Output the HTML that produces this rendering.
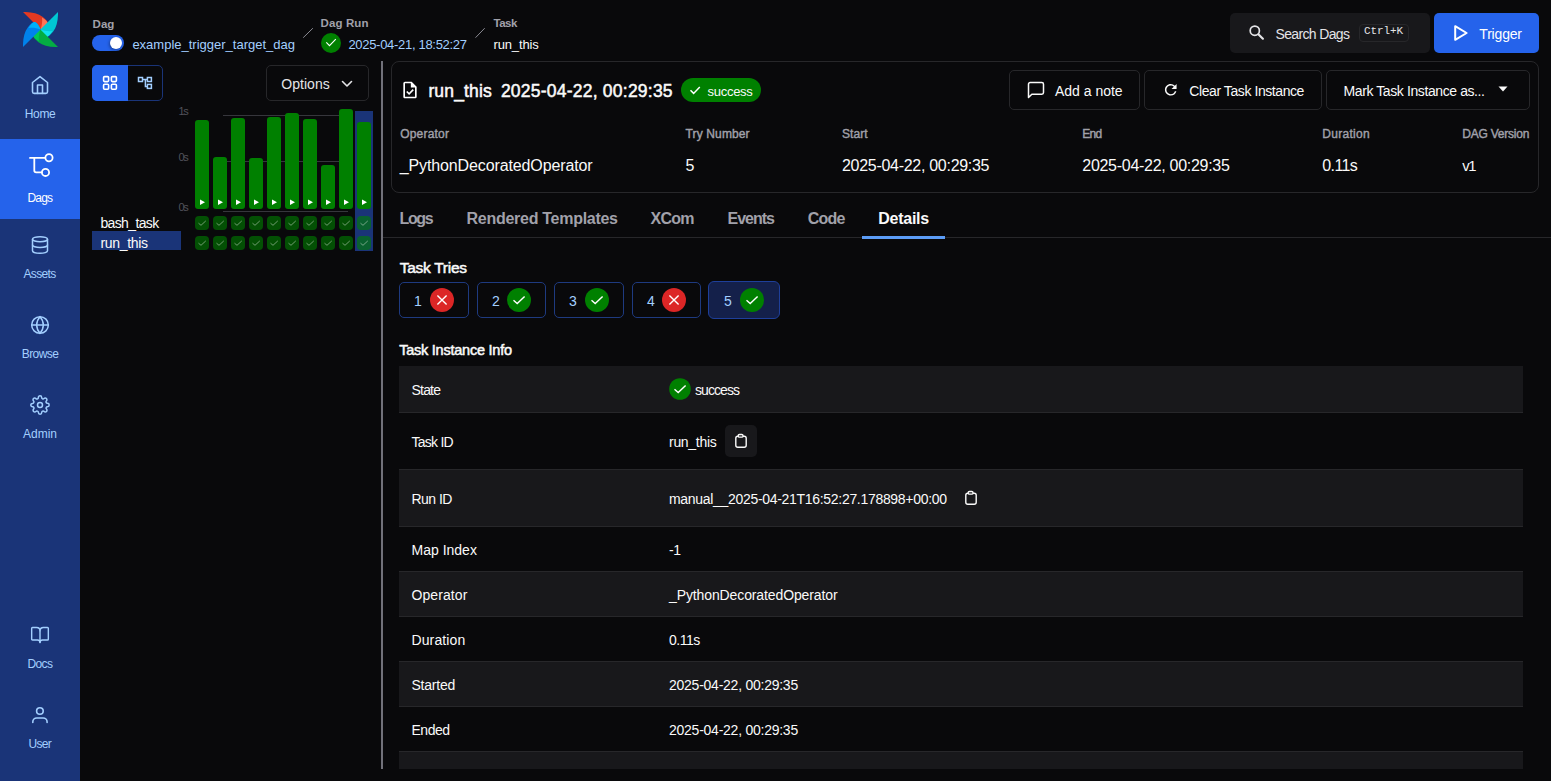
<!DOCTYPE html>
<html><head><meta charset="utf-8"><title>Airflow</title>
<style>
html,body{margin:0;padding:0;}
body{width:1551px;height:781px;overflow:hidden;background:#09090b;position:relative;font-family:"Liberation Sans",sans-serif;}
.t{position:absolute;white-space:nowrap;}
.r{position:absolute;display:block;}
</style></head><body>
<div class="r" style="left:0px;top:0px;width:80px;height:781px;background:#1a3478;border-radius:0px;"></div>
<div class="r" style="left:0px;top:139px;width:80px;height:80px;background:#2563eb;border-radius:0px;"></div>
<svg class="r" style="left:23px;top:12px;" width="35" height="35" viewBox="0 0 35 35">
<g transform="translate(0,0)">
 <path d="M0,0 C8,-0.2 15,1.3 19.5,4.8 C22.6,7.2 24.7,9.6 24.9,11.2 C24.8,13.4 23,15.3 17.6,17.6 Z" fill="#e43921"/>
 <path d="M19,5.6 C22.4,7.8 24.7,9.8 24.9,11.2 C24.8,13.4 23,15.3 17.6,17.6 C18.9,13.8 19.6,9.6 19,5.6 Z" fill="#ff7558"/>
</g>
<g transform="rotate(90 17.5 17.5)">
 <path d="M0,0 C8,-0.2 15,1.3 19.5,4.8 C22.6,7.2 24.7,9.6 24.9,11.2 C24.8,13.4 23,15.3 17.6,17.6 Z" fill="#00c7d4"/>
 <path d="M19,5.6 C22.4,7.8 24.7,9.8 24.9,11.2 C24.8,13.4 23,15.3 17.6,17.6 C18.9,13.8 19.6,9.6 19,5.6 Z" fill="#11e1ee"/>
</g>
<g transform="rotate(180 17.5 17.5)">
 <path d="M0,0 C8,-0.2 15,1.3 19.5,4.8 C22.6,7.2 24.7,9.6 24.9,11.2 C24.8,13.4 23,15.3 17.6,17.6 Z" fill="#04ad43"/>
 <path d="M19,5.6 C22.4,7.8 24.7,9.8 24.9,11.2 C24.8,13.4 23,15.3 17.6,17.6 C18.9,13.8 19.6,9.6 19,5.6 Z" fill="#00c853"/>
</g>
<g transform="rotate(270 17.5 17.5)">
 <path d="M0,0 C8,-0.2 15,1.3 19.5,4.8 C22.6,7.2 24.7,9.6 24.9,11.2 C24.8,13.4 23,15.3 17.6,17.6 Z" fill="#0082ec"/>
 <path d="M19,5.6 C22.4,7.8 24.7,9.8 24.9,11.2 C24.8,13.4 23,15.3 17.6,17.6 C18.9,13.8 19.6,9.6 19,5.6 Z" fill="#00b1f9"/>
</g></svg>
<svg class="r" style="left:29.9px;top:75.1px;" width="20" height="20" viewBox="0 0 24 24"><g fill="none" stroke="#a3cfff" stroke-width="1.9" stroke-linecap="round" stroke-linejoin="round"><path d="M3 9l9-7 9 7v11a2 2 0 0 1-2 2H5a2 2 0 0 1-2-2z"/><polyline points="9 22 9 12 15 12 15 22"/></g></svg>
<div class="t" style="left:24.7px;top:107.6px;font-size:12.00px;line-height:12.00px;color:#a3cfff;font-weight:400;letter-spacing:-0.303px;font-family:'Liberation Sans', sans-serif;">Home</div>
<svg class="r" style="left:26px;top:150.4px;" width="30" height="30" viewBox="0 0 30 30"><g fill="none" stroke="#ffffff" stroke-width="1.8" stroke-linecap="round"><path d="M4 7.9 H19"/><circle cx="23" cy="7.7" r="3.6"/><path d="M8.3 7.9 V20.5 Q8.3 22.4 10.2 22.4 H15.8"/><circle cx="19.5" cy="22.4" r="3.6"/></g></svg>
<div class="t" style="left:27.5px;top:192.4px;font-size:12.00px;line-height:12.00px;color:#ffffff;font-weight:400;letter-spacing:-0.838px;font-family:'Liberation Sans', sans-serif;">Dags</div>
<svg class="r" style="left:29.85px;top:235.3px;" width="20" height="20" viewBox="0 0 24 24"><g fill="none" stroke="#a3cfff" stroke-width="1.8" stroke-linecap="round" stroke-linejoin="round"><ellipse cx="12" cy="5" rx="9" ry="3"/><path d="M21 12c0 1.66-4 3-9 3s-9-1.34-9-3"/><path d="M3 5v14c0 1.66 4 3 9 3s9-1.34 9-3V5"/></g></svg>
<div class="t" style="left:23.5px;top:267.7px;font-size:12.00px;line-height:12.00px;color:#a3cfff;font-weight:400;letter-spacing:-0.662px;font-family:'Liberation Sans', sans-serif;">Assets</div>
<svg class="r" style="left:30.1px;top:314.9px;" width="20" height="20" viewBox="0 0 24 24"><g fill="none" stroke="#a3cfff" stroke-width="1.8" stroke-linecap="round" stroke-linejoin="round"><circle cx="12" cy="12" r="10"/><line x1="2" y1="12" x2="22" y2="12"/><path d="M12 2a15.3 15.3 0 0 1 4 10 15.3 15.3 0 0 1-4 10 15.3 15.3 0 0 1-4-10 15.3 15.3 0 0 1 4-10z"/></g></svg>
<div class="t" style="left:21.7px;top:347.5px;font-size:12.00px;line-height:12.00px;color:#a3cfff;font-weight:400;letter-spacing:-0.563px;font-family:'Liberation Sans', sans-serif;">Browse</div>
<svg class="r" style="left:29.7px;top:394.8px;" width="20" height="20" viewBox="0 0 24 24"><g fill="none" stroke="#a3cfff" stroke-width="1.8" stroke-linecap="round" stroke-linejoin="round"><circle cx="12" cy="12" r="3"/><path d="M19.4 15a1.65 1.65 0 0 0 .33 1.82l.06.06a2 2 0 0 1 0 2.83 2 2 0 0 1-2.83 0l-.06-.06a1.65 1.65 0 0 0-1.82-.33 1.65 1.65 0 0 0-1 1.51V21a2 2 0 0 1-2 2 2 2 0 0 1-2-2v-.09A1.65 1.65 0 0 0 9 19.4a1.650 1.65 0 0 0-1.82.33l-.06.06a2 2 0 0 1-2.83 0 2 2 0 0 1 0-2.83l.06-.06a1.65 1.65 0 0 0 .33-1.82 1.65 1.65 0 0 0-1.51-1H3a2 2 0 0 1-2-2 2 2 0 0 1 2-2h.09A1.65 1.65 0 0 0 4.6 9a1.65 1.65 0 0 0-.33-1.82l-.06-.06a2 2 0 0 1 0-2.83 2 2 0 0 1 2.83 0l.06.06a1.65 1.65 0 0 0 1.82.33H9a1.65 1.65 0 0 0 1-1.51V3a2 2 0 0 1 2-2 2 2 0 0 1 2 2v.09a1.65 1.65 0 0 0 1 1.51 1.65 1.65 0 0 0 1.82-.33l.06-.06a2 2 0 0 1 2.830 0 2 2 0 0 1 0 2.83l-.06.06a1.65 1.65 0 0 0-.33 1.82V9a1.65 1.65 0 0 0 1.51 1H21a2 2 0 0 1 2 2 2 2 0 0 1-2 2h-.09a1.65 1.65 0 0 0-1.51 1z"/></g></svg>
<div class="t" style="left:23.0px;top:427.5px;font-size:12.00px;line-height:12.00px;color:#a3cfff;font-weight:400;letter-spacing:-0.003px;font-family:'Liberation Sans', sans-serif;">Admin</div>
<svg class="r" style="left:30.1px;top:624.8px;" width="20" height="20" viewBox="0 0 24 24"><g fill="none" stroke="#a3cfff" stroke-width="1.7" stroke-linecap="round" stroke-linejoin="round"><path d="M12 7v14"/><path d="M3 18a1 1 0 0 1-1-1V4a1 1 0 0 1 1-1h5a4 4 0 0 1 4 4 4 4 0 0 1 4-4h5a1 1 0 0 1 1 1v13a1 1 0 0 1-1 1h-6a3 3 0 0 0-3 3 3 3 0 0 0-3-3z"/></g></svg>
<div class="t" style="left:27.5px;top:657.7px;font-size:12.00px;line-height:12.00px;color:#a3cfff;font-weight:400;letter-spacing:-0.613px;font-family:'Liberation Sans', sans-serif;">Docs</div>
<svg class="r" style="left:0px;top:0px;" width="80" height="781" viewBox="0 0 80 781"><g fill="none" stroke="#a3cfff" stroke-width="1.6" stroke-linecap="round"><circle cx="39.9" cy="711" r="3.3"/><path d="M32.8 722.4 v-0.4 a4 4 0 0 1 4-4 h6.3 a4 4 0 0 1 4 4 v0.4"/></g></svg>
<div class="t" style="left:28.4px;top:737.7px;font-size:12.00px;line-height:12.00px;color:#a3cfff;font-weight:400;letter-spacing:-0.679px;font-family:'Liberation Sans', sans-serif;">User</div>
<div class="t" style="left:92.6px;top:18.5px;font-size:11.50px;line-height:11.50px;color:#a1a1aa;font-weight:700;letter-spacing:-0.013px;font-family:'Liberation Sans', sans-serif;">Dag</div>
<div class="r" style="left:92px;top:35px;width:32px;height:16px;background:#2563eb;border-radius:8px;"></div>
<div class="r" style="left:110px;top:37px;width:12px;height:12px;background:#ffffff;border-radius:6px;box-shadow:-1px 1px 3px rgba(0,0,0,0.35);"></div>
<div class="t" style="left:132.4px;top:38.0px;font-size:13.00px;line-height:13.00px;color:#a3cfff;font-weight:400;letter-spacing:-0.000px;font-family:'Liberation Sans', sans-serif;">example_trigger_target_dag</div>
<svg class="r" style="left:302px;top:27px;" width="12" height="12" viewBox="0 0 12 12"><line x1="1.2" y1="10.7" x2="10.9" y2="1.2" stroke="#8a8a92" stroke-width="1"/></svg>
<div class="t" style="left:320.6px;top:18.4px;font-size:11.50px;line-height:11.50px;color:#a1a1aa;font-weight:700;letter-spacing:0.104px;font-family:'Liberation Sans', sans-serif;">Dag Run</div>
<svg class="r" style="left:321px;top:33px;" width="20" height="20" viewBox="0 0 20 20"><circle cx="10" cy="10" r="10" fill="#008000"/><path d="M5.3 9.3 L8.5 12.6 L14.8 6.2" fill="none" stroke="#fff" stroke-width="1.1"/></svg>
<div class="t" style="left:348.4px;top:37.7px;font-size:13.00px;line-height:13.00px;color:#a3cfff;font-weight:400;letter-spacing:-0.301px;font-family:'Liberation Sans', sans-serif;">2025-04-21, 18:52:27</div>
<svg class="r" style="left:474px;top:27px;" width="12" height="12" viewBox="0 0 12 12"><line x1="1.5" y1="10.7" x2="10.7" y2="1.2" stroke="#8a8a92" stroke-width="1"/></svg>
<div class="t" style="left:493.5px;top:18.4px;font-size:11.50px;line-height:11.50px;color:#a1a1aa;font-weight:700;letter-spacing:-0.486px;font-family:'Liberation Sans', sans-serif;">Task</div>
<div class="t" style="left:493.5px;top:37.7px;font-size:13.00px;line-height:13.00px;color:#fafafa;font-weight:400;letter-spacing:-0.150px;font-family:'Liberation Sans', sans-serif;">run_this</div>
<div class="r" style="left:1230px;top:13px;width:200px;height:40px;background:#18181b;border-radius:5px;"></div>
<svg class="r" style="left:1240px;top:18px;" width="30" height="30" viewBox="0 0 30 30"><g fill="none" stroke="#e4e4e7" stroke-linecap="round"><circle cx="14.8" cy="12.7" r="4.6" stroke-width="1.7"/><line x1="18.6" y1="16.5" x2="22.9" y2="20.7" stroke-width="2.2"/></g></svg>
<div class="t" style="left:1275.5px;top:27.2px;font-size:14.00px;line-height:14.00px;color:#e4e4e7;font-weight:400;letter-spacing:-0.643px;font-family:'Liberation Sans', sans-serif;">Search Dags</div>
<div class="r" style="left:1359px;top:24px;width:50px;height:18px;background:transparent;border:1px solid #27272a;box-sizing:border-box;border-radius:4px;"></div>
<div class="t" style="left:1364.0px;top:26.3px;font-size:11.00px;line-height:11.00px;color:#e4e4e7;font-weight:400;letter-spacing:-0.121px;font-family:'Liberation Mono', monospace;">Ctrl+K</div>
<div class="r" style="left:1434px;top:13px;width:105px;height:40px;background:#2563eb;border-radius:5px;"></div>
<svg class="r" style="left:1446px;top:18px;" width="30" height="30" viewBox="0 0 30 30"><polygon points="9.2,8.2 20.6,15 9.2,21.8" fill="none" stroke="#fff" stroke-width="2" stroke-linejoin="round"/></svg>
<div class="t" style="left:1479.3px;top:27.2px;font-size:14.00px;line-height:14.00px;color:#ffffff;font-weight:400;letter-spacing:-0.188px;font-family:'Liberation Sans', sans-serif;">Trigger</div>
<div class="r" style="left:92px;top:65px;width:71px;height:36px;background:transparent;border:1px solid #1a3478;box-sizing:border-box;border-radius:5px;"></div>
<div class="r" style="left:92px;top:65px;width:36px;height:36px;background:#2563eb;border-radius:0px;border-radius:5px 0 0 5px;"></div>
<svg class="r" style="left:102px;top:75px;" width="16" height="16" viewBox="0 0 16 16"><g fill="none" stroke="#fff" stroke-width="1.6"><rect x="1.6" y="1.6" width="5" height="5" rx="1"/><rect x="9.4" y="1.6" width="5" height="5" rx="1"/><rect x="1.6" y="9.2" width="5" height="5" rx="1"/><rect x="9.4" y="9.2" width="5" height="5" rx="1"/></g></svg>
<svg class="r" style="left:137px;top:76px;" width="16" height="14" viewBox="0 0 16 14"><g fill="none" stroke="#a3cfff" stroke-width="1.5"><rect x="1.5" y="1.5" width="4" height="4"/><rect x="10.4" y="1.5" width="4" height="4"/><rect x="10.4" y="8.4" width="4" height="4"/><path d="M5.5 3.4 H10.4 M8.4 3.4 V10.4 H10.4"/></g></svg>
<div class="r" style="left:266px;top:65px;width:103px;height:36px;background:transparent;border:1px solid #27272a;box-sizing:border-box;border-radius:5px;"></div>
<div class="t" style="left:281.3px;top:76.6px;font-size:14.00px;line-height:14.00px;color:#e4e4e7;font-weight:400;letter-spacing:0.025px;font-family:'Liberation Sans', sans-serif;">Options</div>
<svg class="r" style="left:339.5px;top:76.5px;" width="14" height="14" viewBox="0 0 14 14"><polyline points="2.5 4.5 7 9 11.5 4.5" fill="none" stroke="#e4e4e7" stroke-width="1.6" stroke-linecap="round" stroke-linejoin="round"/></svg>
<div class="t" style="left:178.5px;top:105.7px;font-size:11.00px;line-height:11.00px;color:#52525b;font-weight:400;letter-spacing:-1.318px;font-family:'Liberation Sans', sans-serif;">1s</div>
<div class="t" style="left:178.5px;top:151.9px;font-size:11.00px;line-height:11.00px;color:#52525b;font-weight:400;letter-spacing:-1.318px;font-family:'Liberation Sans', sans-serif;">0s</div>
<div class="t" style="left:178.5px;top:201.5px;font-size:11.00px;line-height:11.00px;color:#52525b;font-weight:400;letter-spacing:-1.318px;font-family:'Liberation Sans', sans-serif;">0s</div>
<div class="r" style="left:223px;top:115px;width:116px;height:1px;background:#36363c;border-radius:0px;"></div>
<div class="r" style="left:223px;top:161px;width:116px;height:1px;background:#36363c;border-radius:0px;"></div>
<div class="r" style="left:223px;top:211px;width:125px;height:1px;background:#36363c;border-radius:0px;"></div>
<div class="r" style="left:355px;top:111px;width:18px;height:140px;background:#1a3478;border-radius:0px;"></div>
<div class="r" style="left:195px;top:120px;width:14px;height:89px;background:#008000;border-radius:3px;"></div>
<svg class="r" style="left:199px;top:199px;" width="7" height="7" viewBox="0 0 7 7"><polygon points="1,0.5 6,3.25 1,6" fill="#fff"/></svg>
<div class="r" style="left:195px;top:216px;width:14px;height:14px;background:rgba(0,128,0,0.6);border-radius:4px;"></div>
<svg class="r" style="left:195px;top:216px;" width="14" height="14" viewBox="0 0 14 14"><polyline points="3.5 7.2 6 9.3 10.8 4.9" fill="none" stroke="rgba(220,230,220,0.55)" stroke-width="0.9"/></svg>
<div class="r" style="left:195px;top:236px;width:14px;height:14px;background:rgba(0,128,0,0.6);border-radius:4px;"></div>
<svg class="r" style="left:195px;top:236px;" width="14" height="14" viewBox="0 0 14 14"><polyline points="3.5 7.2 6 9.3 10.8 4.9" fill="none" stroke="rgba(220,230,220,0.55)" stroke-width="0.9"/></svg>
<div class="r" style="left:213px;top:157px;width:14px;height:52px;background:#008000;border-radius:3px;"></div>
<svg class="r" style="left:217px;top:199px;" width="7" height="7" viewBox="0 0 7 7"><polygon points="1,0.5 6,3.25 1,6" fill="#fff"/></svg>
<div class="r" style="left:213px;top:216px;width:14px;height:14px;background:rgba(0,128,0,0.6);border-radius:4px;"></div>
<svg class="r" style="left:213px;top:216px;" width="14" height="14" viewBox="0 0 14 14"><polyline points="3.5 7.2 6 9.3 10.8 4.9" fill="none" stroke="rgba(220,230,220,0.55)" stroke-width="0.9"/></svg>
<div class="r" style="left:213px;top:236px;width:14px;height:14px;background:rgba(0,128,0,0.6);border-radius:4px;"></div>
<svg class="r" style="left:213px;top:236px;" width="14" height="14" viewBox="0 0 14 14"><polyline points="3.5 7.2 6 9.3 10.8 4.9" fill="none" stroke="rgba(220,230,220,0.55)" stroke-width="0.9"/></svg>
<div class="r" style="left:231px;top:118px;width:14px;height:91px;background:#008000;border-radius:3px;"></div>
<svg class="r" style="left:235px;top:199px;" width="7" height="7" viewBox="0 0 7 7"><polygon points="1,0.5 6,3.25 1,6" fill="#fff"/></svg>
<div class="r" style="left:231px;top:216px;width:14px;height:14px;background:rgba(0,128,0,0.6);border-radius:4px;"></div>
<svg class="r" style="left:231px;top:216px;" width="14" height="14" viewBox="0 0 14 14"><polyline points="3.5 7.2 6 9.3 10.8 4.9" fill="none" stroke="rgba(220,230,220,0.55)" stroke-width="0.9"/></svg>
<div class="r" style="left:231px;top:236px;width:14px;height:14px;background:rgba(0,128,0,0.6);border-radius:4px;"></div>
<svg class="r" style="left:231px;top:236px;" width="14" height="14" viewBox="0 0 14 14"><polyline points="3.5 7.2 6 9.3 10.8 4.9" fill="none" stroke="rgba(220,230,220,0.55)" stroke-width="0.9"/></svg>
<div class="r" style="left:249px;top:158px;width:14px;height:51px;background:#008000;border-radius:3px;"></div>
<svg class="r" style="left:253px;top:199px;" width="7" height="7" viewBox="0 0 7 7"><polygon points="1,0.5 6,3.25 1,6" fill="#fff"/></svg>
<div class="r" style="left:249px;top:216px;width:14px;height:14px;background:rgba(0,128,0,0.6);border-radius:4px;"></div>
<svg class="r" style="left:249px;top:216px;" width="14" height="14" viewBox="0 0 14 14"><polyline points="3.5 7.2 6 9.3 10.8 4.9" fill="none" stroke="rgba(220,230,220,0.55)" stroke-width="0.9"/></svg>
<div class="r" style="left:249px;top:236px;width:14px;height:14px;background:rgba(0,128,0,0.6);border-radius:4px;"></div>
<svg class="r" style="left:249px;top:236px;" width="14" height="14" viewBox="0 0 14 14"><polyline points="3.5 7.2 6 9.3 10.8 4.9" fill="none" stroke="rgba(220,230,220,0.55)" stroke-width="0.9"/></svg>
<div class="r" style="left:267px;top:117px;width:14px;height:92px;background:#008000;border-radius:3px;"></div>
<svg class="r" style="left:271px;top:199px;" width="7" height="7" viewBox="0 0 7 7"><polygon points="1,0.5 6,3.25 1,6" fill="#fff"/></svg>
<div class="r" style="left:267px;top:216px;width:14px;height:14px;background:rgba(0,128,0,0.6);border-radius:4px;"></div>
<svg class="r" style="left:267px;top:216px;" width="14" height="14" viewBox="0 0 14 14"><polyline points="3.5 7.2 6 9.3 10.8 4.9" fill="none" stroke="rgba(220,230,220,0.55)" stroke-width="0.9"/></svg>
<div class="r" style="left:267px;top:236px;width:14px;height:14px;background:rgba(0,128,0,0.6);border-radius:4px;"></div>
<svg class="r" style="left:267px;top:236px;" width="14" height="14" viewBox="0 0 14 14"><polyline points="3.5 7.2 6 9.3 10.8 4.9" fill="none" stroke="rgba(220,230,220,0.55)" stroke-width="0.9"/></svg>
<div class="r" style="left:285px;top:113px;width:14px;height:96px;background:#008000;border-radius:3px;"></div>
<svg class="r" style="left:289px;top:199px;" width="7" height="7" viewBox="0 0 7 7"><polygon points="1,0.5 6,3.25 1,6" fill="#fff"/></svg>
<div class="r" style="left:285px;top:216px;width:14px;height:14px;background:rgba(0,128,0,0.6);border-radius:4px;"></div>
<svg class="r" style="left:285px;top:216px;" width="14" height="14" viewBox="0 0 14 14"><polyline points="3.5 7.2 6 9.3 10.8 4.9" fill="none" stroke="rgba(220,230,220,0.55)" stroke-width="0.9"/></svg>
<div class="r" style="left:285px;top:236px;width:14px;height:14px;background:rgba(0,128,0,0.6);border-radius:4px;"></div>
<svg class="r" style="left:285px;top:236px;" width="14" height="14" viewBox="0 0 14 14"><polyline points="3.5 7.2 6 9.3 10.8 4.9" fill="none" stroke="rgba(220,230,220,0.55)" stroke-width="0.9"/></svg>
<div class="r" style="left:303px;top:119px;width:14px;height:90px;background:#008000;border-radius:3px;"></div>
<svg class="r" style="left:307px;top:199px;" width="7" height="7" viewBox="0 0 7 7"><polygon points="1,0.5 6,3.25 1,6" fill="#fff"/></svg>
<div class="r" style="left:303px;top:216px;width:14px;height:14px;background:rgba(0,128,0,0.6);border-radius:4px;"></div>
<svg class="r" style="left:303px;top:216px;" width="14" height="14" viewBox="0 0 14 14"><polyline points="3.5 7.2 6 9.3 10.8 4.9" fill="none" stroke="rgba(220,230,220,0.55)" stroke-width="0.9"/></svg>
<div class="r" style="left:303px;top:236px;width:14px;height:14px;background:rgba(0,128,0,0.6);border-radius:4px;"></div>
<svg class="r" style="left:303px;top:236px;" width="14" height="14" viewBox="0 0 14 14"><polyline points="3.5 7.2 6 9.3 10.8 4.9" fill="none" stroke="rgba(220,230,220,0.55)" stroke-width="0.9"/></svg>
<div class="r" style="left:321px;top:165px;width:14px;height:44px;background:#008000;border-radius:3px;"></div>
<svg class="r" style="left:325px;top:199px;" width="7" height="7" viewBox="0 0 7 7"><polygon points="1,0.5 6,3.25 1,6" fill="#fff"/></svg>
<div class="r" style="left:321px;top:216px;width:14px;height:14px;background:rgba(0,128,0,0.6);border-radius:4px;"></div>
<svg class="r" style="left:321px;top:216px;" width="14" height="14" viewBox="0 0 14 14"><polyline points="3.5 7.2 6 9.3 10.8 4.9" fill="none" stroke="rgba(220,230,220,0.55)" stroke-width="0.9"/></svg>
<div class="r" style="left:321px;top:236px;width:14px;height:14px;background:rgba(0,128,0,0.6);border-radius:4px;"></div>
<svg class="r" style="left:321px;top:236px;" width="14" height="14" viewBox="0 0 14 14"><polyline points="3.5 7.2 6 9.3 10.8 4.9" fill="none" stroke="rgba(220,230,220,0.55)" stroke-width="0.9"/></svg>
<div class="r" style="left:339px;top:109px;width:14px;height:100px;background:#008000;border-radius:3px;"></div>
<svg class="r" style="left:343px;top:199px;" width="7" height="7" viewBox="0 0 7 7"><polygon points="1,0.5 6,3.25 1,6" fill="#fff"/></svg>
<div class="r" style="left:339px;top:216px;width:14px;height:14px;background:rgba(0,128,0,0.6);border-radius:4px;"></div>
<svg class="r" style="left:339px;top:216px;" width="14" height="14" viewBox="0 0 14 14"><polyline points="3.5 7.2 6 9.3 10.8 4.9" fill="none" stroke="rgba(220,230,220,0.55)" stroke-width="0.9"/></svg>
<div class="r" style="left:339px;top:236px;width:14px;height:14px;background:rgba(0,128,0,0.6);border-radius:4px;"></div>
<svg class="r" style="left:339px;top:236px;" width="14" height="14" viewBox="0 0 14 14"><polyline points="3.5 7.2 6 9.3 10.8 4.9" fill="none" stroke="rgba(220,230,220,0.55)" stroke-width="0.9"/></svg>
<div class="r" style="left:357px;top:122px;width:14px;height:87px;background:#008000;border-radius:3px;"></div>
<svg class="r" style="left:361px;top:199px;" width="7" height="7" viewBox="0 0 7 7"><polygon points="1,0.5 6,3.25 1,6" fill="#fff"/></svg>
<div class="r" style="left:357px;top:216px;width:14px;height:14px;background:rgba(0,128,0,0.6);border-radius:4px;"></div>
<svg class="r" style="left:357px;top:216px;" width="14" height="14" viewBox="0 0 14 14"><polyline points="3.5 7.2 6 9.3 10.8 4.9" fill="none" stroke="rgba(220,230,220,0.55)" stroke-width="0.9"/></svg>
<div class="r" style="left:357px;top:236px;width:14px;height:14px;background:rgba(0,128,0,0.6);border-radius:4px;"></div>
<svg class="r" style="left:357px;top:236px;" width="14" height="14" viewBox="0 0 14 14"><polyline points="3.5 7.2 6 9.3 10.8 4.9" fill="none" stroke="rgba(220,230,220,0.55)" stroke-width="0.9"/></svg>
<div class="t" style="left:100.4px;top:216.1px;font-size:14.00px;line-height:14.00px;color:#fafafa;font-weight:400;letter-spacing:-0.628px;font-family:'Liberation Sans', sans-serif;">bash_task</div>
<div class="r" style="left:92px;top:231px;width:89px;height:19px;background:#1a3478;border-radius:0px;"></div>
<div class="t" style="left:100.4px;top:236.1px;font-size:14.00px;line-height:14.00px;color:#fafafa;font-weight:400;letter-spacing:-0.315px;font-family:'Liberation Sans', sans-serif;">run_this</div>
<div class="r" style="left:381px;top:61px;width:2px;height:708px;background:#71717a;border-radius:0px;"></div>
<div class="r" style="left:391px;top:61px;width:1148px;height:132px;background:transparent;border:1px solid #27272a;box-sizing:border-box;border-radius:8px;"></div>
<svg class="r" style="left:400px;top:80px;" width="20" height="20" viewBox="0 0 24 24"><path fill="#fff" d="M14 2H6c-1.1 0-1.99.9-1.99 2L4 20c0 1.1.89 2 1.99 2H18c1.1 0 2-.9 2-2V8l-6-6zm4 18H6V4h7v5h5v11zm-9.18-6.95L7.4 14.46 10.94 18l5.66-5.66-1.41-1.41-4.24 4.24-2.13-2.12z"/></svg>
<div class="t" style="left:428.4px;top:82.5px;font-size:17.50px;line-height:17.50px;color:#fafafa;font-weight:400;letter-spacing:0.149px;font-family:'Liberation Sans', sans-serif;-webkit-text-stroke:0.5px #fafafa;">run_this</div>
<div class="t" style="left:500.9px;top:82.5px;font-size:17.50px;line-height:17.50px;color:#fafafa;font-weight:400;letter-spacing:0.228px;font-family:'Liberation Sans', sans-serif;-webkit-text-stroke:0.5px #fafafa;">2025-04-22, 00:29:35</div>
<div class="r" style="left:681px;top:78px;width:80px;height:24px;background:#008000;border-radius:12px;"></div>
<svg class="r" style="left:688px;top:83px;" width="14" height="14" viewBox="0 0 14 14"><polyline points="2.5 7.3 5.6 10.4 11.8 4" fill="none" stroke="#fff" stroke-width="1.5"/></svg>
<div class="t" style="left:707.6px;top:84.6px;font-size:13.00px;line-height:13.00px;color:#fafafa;font-weight:400;letter-spacing:-0.293px;font-family:'Liberation Sans', sans-serif;">success</div>
<div class="r" style="left:1009px;top:70px;width:131px;height:40px;background:transparent;border:1px solid #27272a;box-sizing:border-box;border-radius:5px;"></div>
<svg class="r" style="left:1026px;top:80px;" width="20" height="20" viewBox="0 0 24 24"><path d="M21 15a2 2 0 0 1-2 2H7l-4 4V5a2 2 0 0 1 2-2h14a2 2 0 0 1 2 2z" fill="none" stroke="#fafafa" stroke-width="1.8" stroke-linejoin="round"/></svg>
<div class="t" style="left:1055.0px;top:84.1px;font-size:14.00px;line-height:14.00px;color:#fafafa;font-weight:400;letter-spacing:-0.014px;font-family:'Liberation Sans', sans-serif;">Add a note</div>
<div class="r" style="left:1144px;top:70px;width:178px;height:40px;background:transparent;border:1px solid #27272a;box-sizing:border-box;border-radius:5px;"></div>
<svg class="r" style="left:1162.3px;top:81.3px;" width="17.5" height="17.5" viewBox="0 0 24 24"><path fill="#fafafa" d="M17.65 6.35A7.958 7.958 0 0 0 12 4c-4.42 0-7.99 3.58-7.99 8s3.57 8 7.99 8c3.73 0 6.84-2.55 7.73-6h-2.08A5.99 5.99 0 0 1 12 18c-3.310 0-6-2.69-6-6s2.69-6 6-6c1.66 0 3.14.69 4.22 1.78L13 11h7V4l-2.35 2.35z"/></svg>
<div class="t" style="left:1189.3px;top:84.1px;font-size:14.00px;line-height:14.00px;color:#fafafa;font-weight:400;letter-spacing:-0.422px;font-family:'Liberation Sans', sans-serif;">Clear Task Instance</div>
<div class="r" style="left:1326px;top:70px;width:204px;height:40px;background:transparent;border:1px solid #27272a;box-sizing:border-box;border-radius:5px;"></div>
<div class="t" style="left:1343.5px;top:84.1px;font-size:14.00px;line-height:14.00px;color:#fafafa;font-weight:400;letter-spacing:-0.400px;font-family:'Liberation Sans', sans-serif;">Mark Task Instance as...</div>
<svg class="r" style="left:1498px;top:86px;" width="10" height="6" viewBox="0 0 10 6"><polygon points="0.5,0.5 9.5,0.5 5,5.5" fill="#fafafa"/></svg>
<div class="t" style="left:400.2px;top:128.1px;font-size:12.00px;line-height:12.00px;color:#a1a1aa;font-weight:400;letter-spacing:0.206px;font-family:'Liberation Sans', sans-serif;-webkit-text-stroke:0.4px #a1a1aa;">Operator</div>
<div class="t" style="left:685.6px;top:128.1px;font-size:12.00px;line-height:12.00px;color:#a1a1aa;font-weight:400;letter-spacing:0.123px;font-family:'Liberation Sans', sans-serif;-webkit-text-stroke:0.4px #a1a1aa;">Try Number</div>
<div class="t" style="left:842.0px;top:128.1px;font-size:12.00px;line-height:12.00px;color:#a1a1aa;font-weight:400;letter-spacing:0.040px;font-family:'Liberation Sans', sans-serif;-webkit-text-stroke:0.4px #a1a1aa;">Start</div>
<div class="t" style="left:1082.3px;top:128.1px;font-size:12.00px;line-height:12.00px;color:#a1a1aa;font-weight:400;letter-spacing:-0.776px;font-family:'Liberation Sans', sans-serif;-webkit-text-stroke:0.4px #a1a1aa;">End</div>
<div class="t" style="left:1322.3px;top:128.1px;font-size:12.00px;line-height:12.00px;color:#a1a1aa;font-weight:400;letter-spacing:0.277px;font-family:'Liberation Sans', sans-serif;-webkit-text-stroke:0.4px #a1a1aa;">Duration</div>
<div class="t" style="left:1462.3px;top:128.1px;font-size:12.00px;line-height:12.00px;color:#a1a1aa;font-weight:400;letter-spacing:-0.226px;font-family:'Liberation Sans', sans-serif;-webkit-text-stroke:0.4px #a1a1aa;">DAG Version</div>
<div class="t" style="left:399.7px;top:158.3px;font-size:16.00px;line-height:16.00px;color:#fafafa;font-weight:400;letter-spacing:-0.116px;font-family:'Liberation Sans', sans-serif;">_PythonDecoratedOperator</div>
<div class="t" style="left:685.5px;top:158.3px;font-size:16.00px;line-height:16.00px;color:#fafafa;font-weight:400;letter-spacing:0.000px;font-family:'Liberation Sans', sans-serif;">5</div>
<div class="t" style="left:842.0px;top:158.3px;font-size:16.00px;line-height:16.00px;color:#fafafa;font-weight:400;letter-spacing:-0.290px;font-family:'Liberation Sans', sans-serif;">2025-04-22, 00:29:35</div>
<div class="t" style="left:1082.3px;top:158.3px;font-size:16.00px;line-height:16.00px;color:#fafafa;font-weight:400;letter-spacing:-0.290px;font-family:'Liberation Sans', sans-serif;">2025-04-22, 00:29:35</div>
<div class="t" style="left:1322.3px;top:158.3px;font-size:16.00px;line-height:16.00px;color:#fafafa;font-weight:400;letter-spacing:-0.613px;font-family:'Liberation Sans', sans-serif;">0.11s</div>
<div class="t" style="left:1462.3px;top:159.3px;font-size:14.83px;line-height:14.83px;color:#fafafa;font-weight:400;letter-spacing:-1.567px;font-family:'Liberation Sans', sans-serif;">v1</div>
<div class="r" style="left:383px;top:237px;width:1168px;height:1px;background:#27272a;border-radius:0px;"></div>
<div class="t" style="left:399.6px;top:211.4px;font-size:16.00px;line-height:16.00px;color:#a1a1aa;font-weight:700;letter-spacing:-1.406px;font-family:'Liberation Sans', sans-serif;">Logs</div>
<div class="t" style="left:466.6px;top:211.4px;font-size:16.00px;line-height:16.00px;color:#a1a1aa;font-weight:700;letter-spacing:-0.282px;font-family:'Liberation Sans', sans-serif;">Rendered Templates</div>
<div class="t" style="left:650.6px;top:211.4px;font-size:16.00px;line-height:16.00px;color:#a1a1aa;font-weight:700;letter-spacing:-0.809px;font-family:'Liberation Sans', sans-serif;">XCom</div>
<div class="t" style="left:727.5px;top:211.4px;font-size:16.00px;line-height:16.00px;color:#a1a1aa;font-weight:700;letter-spacing:-0.994px;font-family:'Liberation Sans', sans-serif;">Events</div>
<div class="t" style="left:807.7px;top:211.4px;font-size:16.00px;line-height:16.00px;color:#a1a1aa;font-weight:700;letter-spacing:-0.733px;font-family:'Liberation Sans', sans-serif;">Code</div>
<div class="t" style="left:878.3px;top:211.4px;font-size:16.00px;line-height:16.00px;color:#fafafa;font-weight:700;letter-spacing:-0.262px;font-family:'Liberation Sans', sans-serif;">Details</div>
<div class="r" style="left:862px;top:236px;width:83px;height:3px;background:#5b9cf6;border-radius:0px;"></div>
<div class="t" style="left:399.7px;top:259.7px;font-size:15.50px;line-height:15.50px;color:#fafafa;font-weight:400;letter-spacing:-0.274px;font-family:'Liberation Sans', sans-serif;-webkit-text-stroke:0.5px #fafafa;">Task Tries</div>
<div class="r" style="left:399px;top:282px;width:70px;height:36px;background:transparent;border:1px solid #1e3a80;box-sizing:border-box;border-radius:5px;"></div>
<div class="t" style="left:414.0px;top:294.1px;font-size:14.00px;line-height:14.00px;color:#a3cfff;font-weight:400;letter-spacing:0.000px;font-family:'Liberation Sans', sans-serif;">1</div>
<svg class="r" style="left:430px;top:288px;" width="24" height="24" viewBox="0 0 24 24"><circle cx="12" cy="12" r="12" fill="#dc2626"/><path d="M7.4 7.4 L16.6 16.6 M16.6 7.4 L7.4 16.6" stroke="#fff" stroke-width="1.4"/></svg>
<div class="r" style="left:477px;top:282px;width:69px;height:36px;background:transparent;border:1px solid #1e3a80;box-sizing:border-box;border-radius:5px;"></div>
<div class="t" style="left:492.0px;top:294.1px;font-size:14.00px;line-height:14.00px;color:#a3cfff;font-weight:400;letter-spacing:0.000px;font-family:'Liberation Sans', sans-serif;">2</div>
<svg class="r" style="left:507px;top:288px;" width="24" height="24" viewBox="0 0 24 24"><circle cx="12" cy="12" r="12" fill="#008000"/><polyline points="6.5,12.2 10.2,15.6 17.6,8.4" fill="none" stroke="#fff" stroke-width="1.4"/></svg>
<div class="r" style="left:554px;top:282px;width:70px;height:36px;background:transparent;border:1px solid #1e3a80;box-sizing:border-box;border-radius:5px;"></div>
<div class="t" style="left:569.0px;top:294.1px;font-size:14.00px;line-height:14.00px;color:#a3cfff;font-weight:400;letter-spacing:0.000px;font-family:'Liberation Sans', sans-serif;">3</div>
<svg class="r" style="left:585px;top:288px;" width="24" height="24" viewBox="0 0 24 24"><circle cx="12" cy="12" r="12" fill="#008000"/><polyline points="6.5,12.2 10.2,15.6 17.6,8.4" fill="none" stroke="#fff" stroke-width="1.4"/></svg>
<div class="r" style="left:632px;top:282px;width:69px;height:36px;background:transparent;border:1px solid #1e3a80;box-sizing:border-box;border-radius:5px;"></div>
<div class="t" style="left:647.0px;top:294.1px;font-size:14.00px;line-height:14.00px;color:#a3cfff;font-weight:400;letter-spacing:0.000px;font-family:'Liberation Sans', sans-serif;">4</div>
<svg class="r" style="left:662px;top:288px;" width="24" height="24" viewBox="0 0 24 24"><circle cx="12" cy="12" r="12" fill="#dc2626"/><path d="M7.4 7.4 L16.6 16.6 M16.6 7.4 L7.4 16.6" stroke="#fff" stroke-width="1.4"/></svg>
<div class="r" style="left:708px;top:281px;width:72px;height:38px;background:#14204a;border:1px solid #1e3f9a;box-sizing:border-box;border-radius:6px;"></div>
<div class="t" style="left:724.0px;top:294.1px;font-size:14.00px;line-height:14.00px;color:#a3cfff;font-weight:400;letter-spacing:0.000px;font-family:'Liberation Sans', sans-serif;">5</div>
<svg class="r" style="left:740px;top:288px;" width="24" height="24" viewBox="0 0 24 24"><circle cx="12" cy="12" r="12" fill="#008000"/><polyline points="6.5,12.2 10.2,15.6 17.6,8.4" fill="none" stroke="#fff" stroke-width="1.4"/></svg>
<div class="t" style="left:399.2px;top:342.5px;font-size:14.50px;line-height:14.50px;color:#fafafa;font-weight:400;letter-spacing:-0.239px;font-family:'Liberation Sans', sans-serif;-webkit-text-stroke:0.5px #fafafa;">Task Instance Info</div>
<div class="r" style="left:0;top:0;width:1551px;height:769px;overflow:hidden">
<div class="r" style="left:399px;top:366px;width:1124px;height:47px;background:#18181b;border-radius:0px;border-bottom:1px solid #27272a;box-sizing:border-box;"></div>
<div class="r" style="left:399px;top:413px;width:1124px;height:57px;background:transparent;border-radius:0px;border-bottom:1px solid #27272a;box-sizing:border-box;"></div>
<div class="r" style="left:399px;top:470px;width:1124px;height:57px;background:#18181b;border-radius:0px;border-bottom:1px solid #27272a;box-sizing:border-box;"></div>
<div class="r" style="left:399px;top:527px;width:1124px;height:45px;background:transparent;border-radius:0px;border-bottom:1px solid #27272a;box-sizing:border-box;"></div>
<div class="r" style="left:399px;top:572px;width:1124px;height:45px;background:#18181b;border-radius:0px;border-bottom:1px solid #27272a;box-sizing:border-box;"></div>
<div class="r" style="left:399px;top:617px;width:1124px;height:45px;background:transparent;border-radius:0px;border-bottom:1px solid #27272a;box-sizing:border-box;"></div>
<div class="r" style="left:399px;top:662px;width:1124px;height:45px;background:#18181b;border-radius:0px;border-bottom:1px solid #27272a;box-sizing:border-box;"></div>
<div class="r" style="left:399px;top:707px;width:1124px;height:45px;background:transparent;border-radius:0px;border-bottom:1px solid #27272a;box-sizing:border-box;"></div>
<div class="r" style="left:399px;top:752px;width:1124px;height:45px;background:#18181b;border-radius:0px;border-bottom:1px solid #27272a;box-sizing:border-box;"></div>
</div>
<div class="t" style="left:411.5px;top:382.9px;font-size:14.00px;line-height:14.00px;color:#fafafa;font-weight:400;letter-spacing:-0.797px;font-family:'Liberation Sans', sans-serif;">State</div>
<div class="t" style="left:411.5px;top:434.9px;font-size:14.00px;line-height:14.00px;color:#fafafa;font-weight:400;letter-spacing:-0.746px;font-family:'Liberation Sans', sans-serif;">Task ID</div>
<div class="t" style="left:411.5px;top:491.9px;font-size:14.00px;line-height:14.00px;color:#fafafa;font-weight:400;letter-spacing:-0.534px;font-family:'Liberation Sans', sans-serif;">Run ID</div>
<div class="t" style="left:411.5px;top:542.9px;font-size:14.00px;line-height:14.00px;color:#fafafa;font-weight:400;letter-spacing:0.003px;font-family:'Liberation Sans', sans-serif;">Map Index</div>
<div class="t" style="left:411.5px;top:587.9px;font-size:14.00px;line-height:14.00px;color:#fafafa;font-weight:400;letter-spacing:0.079px;font-family:'Liberation Sans', sans-serif;">Operator</div>
<div class="t" style="left:411.5px;top:632.9px;font-size:14.00px;line-height:14.00px;color:#fafafa;font-weight:400;letter-spacing:0.112px;font-family:'Liberation Sans', sans-serif;">Duration</div>
<div class="t" style="left:411.5px;top:677.9px;font-size:14.00px;line-height:14.00px;color:#fafafa;font-weight:400;letter-spacing:-0.223px;font-family:'Liberation Sans', sans-serif;">Started</div>
<div class="t" style="left:411.5px;top:722.9px;font-size:14.00px;line-height:14.00px;color:#fafafa;font-weight:400;letter-spacing:-0.496px;font-family:'Liberation Sans', sans-serif;">Ended</div>
<svg class="r" style="left:669px;top:378px;" width="22" height="22" viewBox="0 0 22 22"><circle cx="11" cy="11" r="10.8" fill="#008000"/><polyline points="5.5,11.2 9.2,14.6 16.6,7.4" fill="none" stroke="#fff" stroke-width="1.4"/></svg>
<div class="t" style="left:695.0px;top:382.9px;font-size:14.00px;line-height:14.00px;color:#fafafa;font-weight:400;letter-spacing:-0.929px;font-family:'Liberation Sans', sans-serif;">success</div>
<div class="t" style="left:669.0px;top:434.9px;font-size:14.00px;line-height:14.00px;color:#fafafa;font-weight:400;letter-spacing:-0.287px;font-family:'Liberation Sans', sans-serif;">run_this</div>
<div class="r" style="left:725px;top:425px;width:32px;height:32px;background:#18181b;border-radius:5px;"></div>
<svg class="r" style="left:725px;top:425px;" width="32" height="32" viewBox="0 0 32 32"><g fill="none" stroke="#fafafa" stroke-width="1.4" transform="translate(4.6,0)"><path d="M13.4 11.2 H14.6 a2 2 0 0 1 2 2 V20.2 a2 2 0 0 1 -2 2 H8.2 a2 2 0 0 1 -2 -2 V13.2 a2 2 0 0 1 2 -2 H8.6"/><rect x="8.6" y="9.5" width="4.8" height="2.6" rx="1.2"/></g></svg>
<div class="t" style="left:669.0px;top:491.9px;font-size:14.00px;line-height:14.00px;color:#fafafa;font-weight:400;letter-spacing:-0.307px;font-family:'Liberation Sans', sans-serif;">manual__2025-04-21T16:52:27.178898+00:00</div>
<svg class="r" style="left:955px;top:482px;" width="32" height="32" viewBox="0 0 32 32"><g fill="none" stroke="#fafafa" stroke-width="1.4" transform="translate(4.6,0)"><path d="M13.4 11.2 H14.6 a2 2 0 0 1 2 2 V20.2 a2 2 0 0 1 -2 2 H8.2 a2 2 0 0 1 -2 -2 V13.2 a2 2 0 0 1 2 -2 H8.6"/><rect x="8.6" y="9.5" width="4.8" height="2.6" rx="1.2"/></g></svg>
<div class="t" style="left:669.0px;top:542.9px;font-size:14.00px;line-height:14.00px;color:#fafafa;font-weight:400;letter-spacing:-0.448px;font-family:'Liberation Sans', sans-serif;">-1</div>
<div class="t" style="left:669.0px;top:587.9px;font-size:14.00px;line-height:14.00px;color:#fafafa;font-weight:400;letter-spacing:-0.114px;font-family:'Liberation Sans', sans-serif;">_PythonDecoratedOperator</div>
<div class="t" style="left:669.0px;top:632.9px;font-size:14.00px;line-height:14.00px;color:#fafafa;font-weight:400;letter-spacing:-0.477px;font-family:'Liberation Sans', sans-serif;">0.11s</div>
<div class="t" style="left:669.0px;top:677.9px;font-size:14.00px;line-height:14.00px;color:#fafafa;font-weight:400;letter-spacing:-0.247px;font-family:'Liberation Sans', sans-serif;">2025-04-22, 00:29:35</div>
<div class="t" style="left:669.0px;top:722.9px;font-size:14.00px;line-height:14.00px;color:#fafafa;font-weight:400;letter-spacing:-0.247px;font-family:'Liberation Sans', sans-serif;">2025-04-22, 00:29:35</div>
</body></html>
